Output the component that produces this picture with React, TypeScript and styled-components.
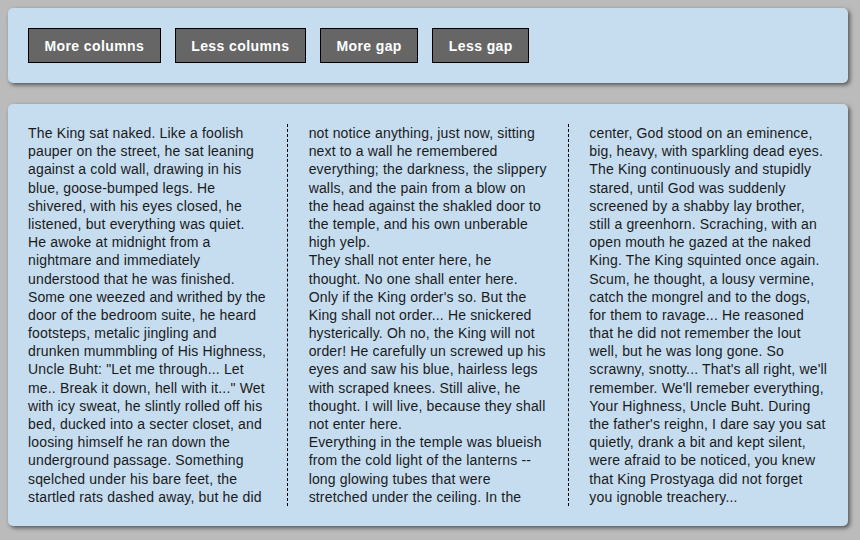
import React from "react";
import styled, { createGlobalStyle } from "styled-components";

const Global = createGlobalStyle`
  html, body { margin: 0; padding: 0; }
  body {
    background: #bbbbbb;
    padding: 8px;
    font-family: "Liberation Sans", Arial, sans-serif;
  }
`;

const Page = styled.div`
  width: 840px;
  display: flex;
  flex-direction: column;
  gap: 21px;
`;

const Panel = styled.section`
  background: #c6ddf0;
  border-radius: 5px;
  box-shadow: 2px 2px 4px rgba(0, 0, 0, 0.55);
  padding: 20px;
`;

const Toolbar = styled(Panel)`
  display: flex;
  gap: 14px;
`;

const Button = styled.button`
  height: 35px;
  padding: 0 15.5px;
  background: #666666;
  border: 1px solid #000;
  color: #fff;
  font-family: "Liberation Sans", Arial, sans-serif;
  font-weight: bold;
  font-size: 14px;
  letter-spacing: 0.4px;
  cursor: pointer;
`;

const Columns = styled.div`
  column-count: 3;
  column-gap: 42px;
  column-rule: 1px dashed #000;
  font-size: 14px;
  letter-spacing: 0.16px;
  line-height: 1.3;
  color: #1a1a1a;
`;

const Para = styled.p`
  margin: 0;
`;

const Tight = styled.span`
  letter-spacing: 0.1px;
`;

export default function App() {
  return (
    <>
      <Global />
      <Page>
        <Toolbar>
          <Button>More columns</Button>
          <Button>Less columns</Button>
          <Button>More gap</Button>
          <Button>Less gap</Button>
        </Toolbar>
        <Panel>
          <Columns>
            <Para>
              The King sat naked. Like a foolish pauper on the street, he sat leaning against a cold wall, drawing in his blue, goose-bumped legs. He shivered, with his eyes closed, he listened, but everything was quiet. He awoke at midnight from a nightmare and immediately understood that he was finished.{" "}
              <Tight>Some one weezed and writhed by the</Tight> door of the bedroom suite, he heard footsteps, metalic jingling and drunken mummbling of His Highness, Uncle Buht: "Let me through... Let me.. Break it down, hell with it..." Wet with icy sweat, he slintly rolled off his bed, ducked into a secter closet, and loosing himself he ran down the underground passage. Something sqelched under his bare feet, the startled rats dashed away, but he did not notice anything, just now, sitting next to a wall he remembered everything; the darkness, the slippery walls, and the pain from a blow on the head against the shakled door to the temple, and his own unberable high yelp.
            </Para>
            <Para>
              They shall not enter here, he thought. No one shall enter here. Only if the King order's so. But the King shall not order... He snickered hysterically. Oh no, the King will not order! He carefully un screwed up his eyes and saw his blue, hairless legs with scraped knees. Still alive, he thought. I will live, because they shall not enter here.
            </Para>
            <Para>
              Everything in the temple was blueish from the cold light of the lanterns -- long glowing tubes that were stretched under the ceiling. In the center, God stood on an eminence, big, heavy, with sparkling dead eyes. The King continuously and stupidly stared, until God was suddenly screened by a shabby lay brother, still a greenhorn. Scraching, with an open mouth he gazed at the naked King. The King squinted once again. Scum, he thought, a lousy vermine, catch the mongrel and to the dogs, for them to ravage... He reasoned that he did not remember the lout well, but he was long gone. So scrawny, snotty... That's all right, we'll remember. We'll remeber everything, Your Highness, Uncle Buht. During the father's reighn, I dare say you sat quietly, drank a bit and kept silent, were afraid to be noticed, you knew that King Prostyaga did not forget you ignoble treachery...
            </Para>
          </Columns>
        </Panel>
      </Page>
    </>
  );
}
